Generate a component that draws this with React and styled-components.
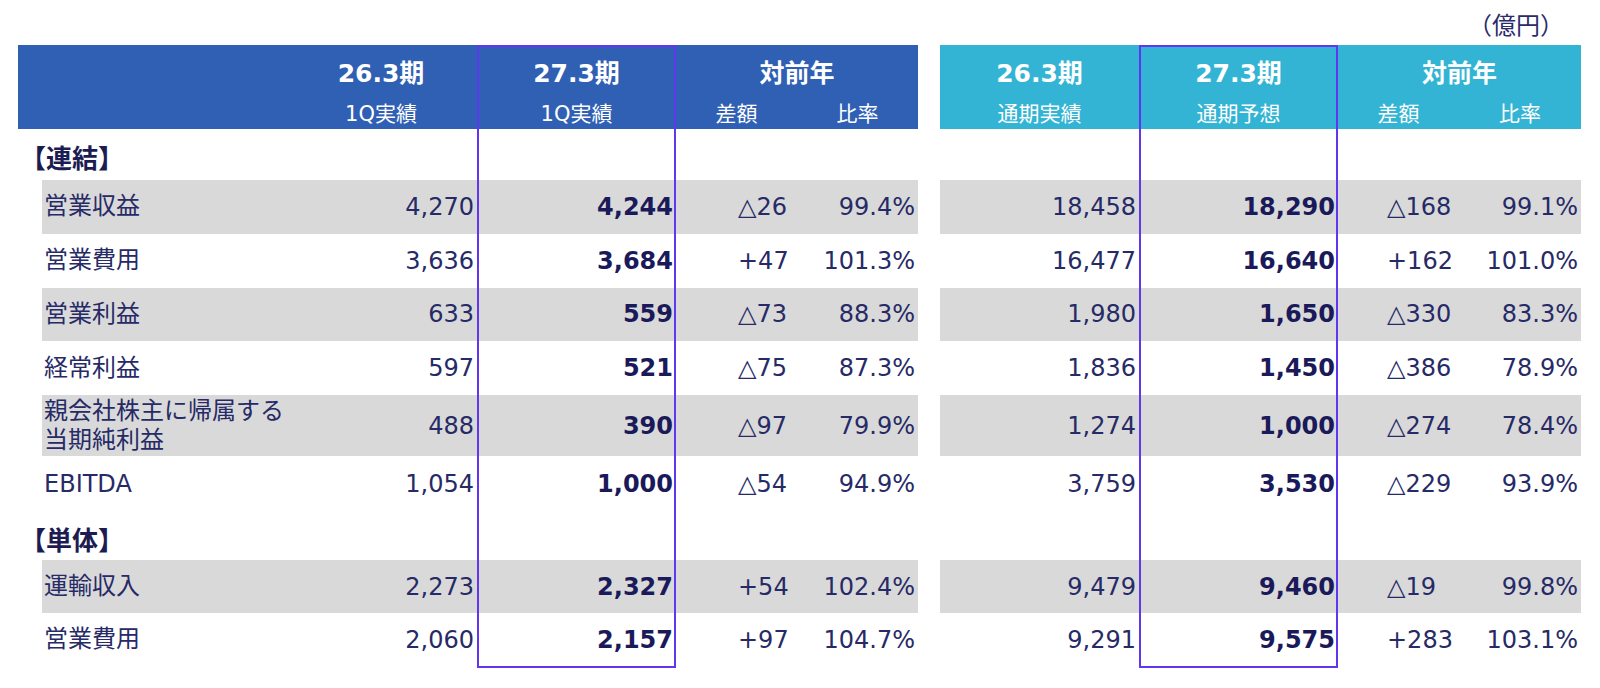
import React from 'react';
import styled, { createGlobalStyle, css } from 'styled-components';

const GlobalStyle = createGlobalStyle`
	body {
		margin: 0;
		background: #ffffff;
	}
`;

const consolidated = [
	{ label: '営業収益', q: ['4,270', '4,244', '△26', '99.4%'], y: ['18,458', '18,290', '△168', '99.1%'], shade: true },
	{ label: '営業費用', q: ['3,636', '3,684', '+47', '101.3%'], y: ['16,477', '16,640', '+162', '101.0%'] },
	{ label: '営業利益', q: ['633', '559', '△73', '88.3%'], y: ['1,980', '1,650', '△330', '83.3%'], shade: true },
	{ label: '経常利益', q: ['597', '521', '△75', '87.3%'], y: ['1,836', '1,450', '△386', '78.9%'] },
	{ label: ['親会社株主に帰属する', '当期純利益'], q: ['488', '390', '△97', '79.9%'], y: ['1,274', '1,000', '△274', '78.4%'], shade: true },
	{ label: 'EBITDA', q: ['1,054', '1,000', '△54', '94.9%'], y: ['3,759', '3,530', '△229', '93.9%'] },
];

const single = [
	{ label: '運輸収入', q: ['2,273', '2,327', '+54', '102.4%'], y: ['9,479', '9,460', '△19', '99.8%'], shade: true },
	{ label: '営業費用', q: ['2,060', '2,157', '+97', '104.7%'], y: ['9,291', '9,575', '+283', '103.1%'] },
];

const ROWS = '50px 34px 51px 53.75px 53.75px 53.75px 53.75px 61px 56px 48px 53px 53px 2px';

// every cell is placed by row / column so the highlight frame can overlap them
const placed = css`
	grid-row: ${p => p.$r};
	grid-column: ${p => p.$c} / span ${p => p.$span || 1};
`;

const Page = styled.div`
	padding-left: 18px;
	font-family: "DejaVu Sans", "Noto Sans CJK JP", sans-serif;
	color: #262a66;
`;

const UnitRow = styled.div`
	height: 45px;
	display: flex;
	justify-content: flex-end;
	align-items: center;
	padding-right: 36px;
	padding-top: 2px;
	box-sizing: border-box;
	font-size: 24px;
	font-family: "Noto Sans CJK JP", sans-serif;
	color: #2b2b6b;
`;

const Tables = styled.div`
	display: flex;
	gap: 22px;
`;

const Grid = styled.div`
	display: grid;
	grid-template-columns: ${p => p.$cols};
	grid-template-rows: ${ROWS};
`;

const HeadCell = styled.div`
	${placed};
	background: ${p => p.$tone};
	color: #ffffff;
	display: flex;
	align-items: center;
	justify-content: center;
	font-size: ${p => (p.$sub ? '21px' : '25px')};
	font-weight: ${p => (p.$sub ? 400 : 700)};
	padding-top: ${p => (p.$sub ? '0' : '2px')};
	white-space: nowrap;
`;

const SectionCell = styled.div`
	${placed};
	display: flex;
	align-items: center;
	padding-left: 2px;
	padding-top: 4px;
	font-size: 26px;
	font-weight: 700;
	font-family: "Noto Sans CJK JP", sans-serif;
	color: #1c1c52;
`;

const Label = styled.div`
	${placed};
	margin-left: 24px;
	padding-left: 2px;
	display: flex;
	flex-direction: column;
	justify-content: center;
	background: ${p => (p.$shade ? '#d9d9d9' : 'transparent')};
	font-size: 24px;
	line-height: 29px;
	white-space: nowrap;
`;

const Num = styled.div`
	${placed};
	display: flex;
	align-items: center;
	justify-content: flex-end;
	padding-right: 3px;
	background: ${p => (p.$shade ? '#d9d9d9' : 'transparent')};
	font-size: 24px;
	font-weight: ${p => (p.$bold ? 700 : 400)};
	color: ${p => (p.$bold ? '#1a1a5a' : 'inherit')};
`;

const Diff = styled.div`
	${placed};
	display: flex;
	align-items: center;
	padding-left: ${p => p.$indent}px;
	background: ${p => (p.$shade ? '#d9d9d9' : 'transparent')};
	font-size: 24px;
	white-space: nowrap;
`;

const Highlight = styled.div`
	grid-column: ${p => p.$c};
	grid-row: 1 / -1;
	border: 2px solid #6236f0;
	position: relative;
	z-index: 1;
	pointer-events: none;
`;

const BLUE = '#3060b4';
const CYAN = '#34b4d4';

const DataRow = ({ row, r, side, withLabel, indent }) => {
	const [a, b, d, rate] = row[side];
	const o = withLabel ? 1 : 0;
	return (
		<>
			{withLabel && (
				<Label $r={r} $c={1} $shade={row.shade}>
					{Array.isArray(row.label) ? row.label.map(l => <span key={l}>{l}</span>) : row.label}
				</Label>
			)}
			<Num $r={r} $c={1 + o} $shade={row.shade}>{a}</Num>
			<Num $r={r} $c={2 + o} $shade={row.shade} $bold>{b}</Num>
			<Diff $r={r} $c={3 + o} $shade={row.shade} $indent={indent}>{d}</Diff>
			<Num $r={r} $c={4 + o} $shade={row.shade}>{rate}</Num>
		</>
	);
};

const Table = ({ side, tone, withLabel, cols, indent, sub }) => {
	const o = withLabel ? 1 : 0;
	const span = withLabel ? 5 : 4;
	return (
		<Grid $cols={cols}>
			{withLabel && <HeadCell $r={1} $c={1} $tone={tone} />}
			<HeadCell $r={1} $c={1 + o} $tone={tone}>26.3期</HeadCell>
			<HeadCell $r={1} $c={2 + o} $tone={tone}>27.3期</HeadCell>
			<HeadCell $r={1} $c={3 + o} $span={2} $tone={tone}>対前年</HeadCell>
			{withLabel && <HeadCell $r={2} $c={1} $tone={tone} $sub />}
			<HeadCell $r={2} $c={1 + o} $tone={tone} $sub>{sub[0]}</HeadCell>
			<HeadCell $r={2} $c={2 + o} $tone={tone} $sub>{sub[1]}</HeadCell>
			<HeadCell $r={2} $c={3 + o} $tone={tone} $sub>差額</HeadCell>
			<HeadCell $r={2} $c={4 + o} $tone={tone} $sub>比率</HeadCell>

			<SectionCell $r={3} $c={1} $span={span}>{withLabel ? '【連結】' : ''}</SectionCell>
			{consolidated.map((row, i) => (
				<DataRow key={`c${i}`} r={4 + i} row={row} side={side} withLabel={withLabel} indent={indent} />
			))}

			<SectionCell $r={10} $c={1} $span={span}>{withLabel ? '【単体】' : ''}</SectionCell>
			{single.map((row, i) => (
				<DataRow key={`s${i}`} r={11 + i} row={row} side={side} withLabel={withLabel} indent={indent} />
			))}

			<Highlight $c={2 + o} />
		</Grid>
	);
};

const App = () => {
	return (
		<Page>
			<GlobalStyle />
			<UnitRow>（億円）</UnitRow>
			<Tables>
				<Table
					side="q"
					tone={BLUE}
					withLabel
					cols="267px 192px 199px 121px 121px"
					indent={62}
					sub={['1Q実績', '1Q実績']}
				/>
				<Table
					side="y"
					tone={CYAN}
					cols="199px 199px 121px 122px"
					indent={49}
					sub={['通期実績', '通期予想']}
				/>
			</Tables>
		</Page>
	);
};

export default App;
